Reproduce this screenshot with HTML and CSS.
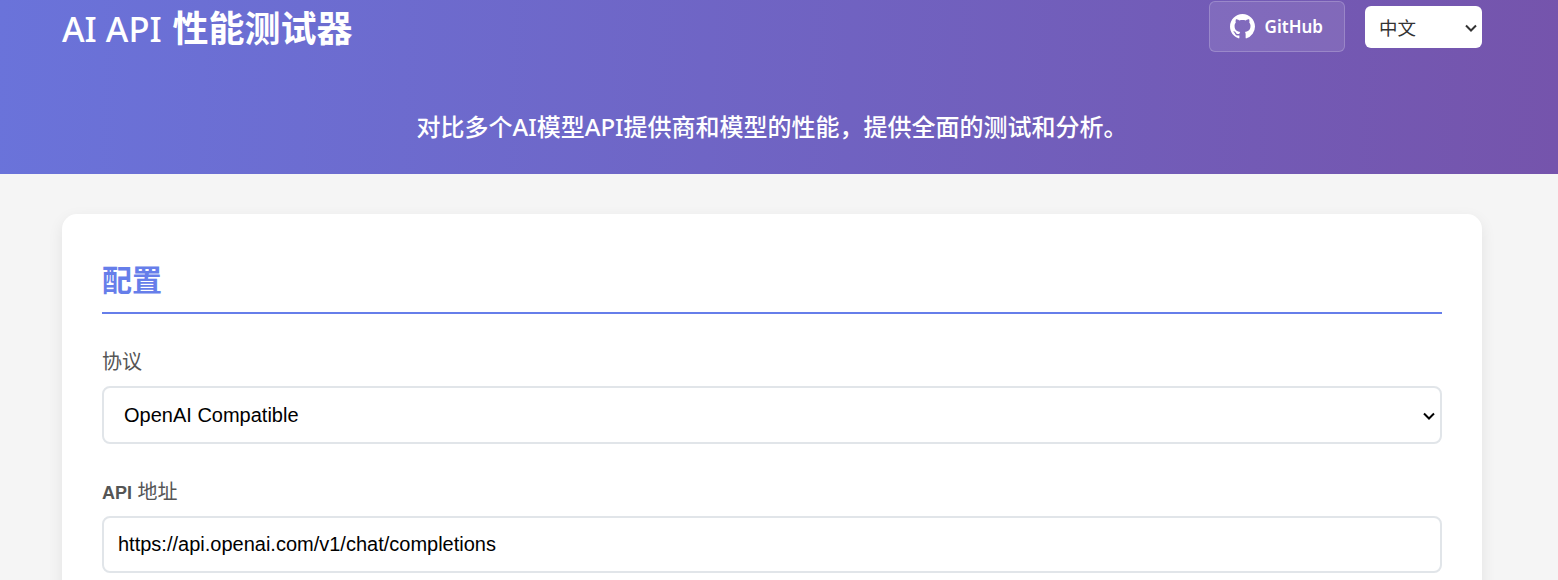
FILE: index.html
```html
<!DOCTYPE html>
<html lang="zh-CN">
<head>
    <meta charset="UTF-8">
    <meta name="viewport" content="width=device-width, initial-scale=1.0">
    <title>AI API 性能测试器</title>
    <link rel="stylesheet" href="styles.css">
</head>
<body>
    <header class="site-header">
        <div class="header-top">
            <h1 class="site-title">AI API <span class="site-title-cjk">性能测试器</span></h1>
            <div class="header-actions">
                <a class="github-link" href="#">
                    <svg class="github-icon" viewBox="0 0 16 16" aria-hidden="true">
                        <path d="M8 0C3.58 0 0 3.58 0 8c0 3.54 2.29 6.53 5.47 7.59.4.07.55-.17.55-.38 0-.19-.01-.82-.01-1.49-2.01.37-2.53-.49-2.69-.94-.09-.23-.48-.94-.82-1.13-.28-.15-.68-.52-.01-.53.63-.01 1.08.58 1.23.82.72 1.21 1.87.87 2.33.66.07-.52.28-.87.51-1.07-1.78-.2-3.64-.89-3.64-3.95 0-.87.31-1.59.82-2.15-.08-.2-.36-1.02.08-2.12 0 0 .67-.21 2.2.82.64-.18 1.32-.27 2-.27s1.36.09 2 .27c1.53-1.04 2.2-.82 2.2-.82.44 1.1.16 1.92.08 2.12.51.56.82 1.27.82 2.15 0 3.07-1.87 3.75-3.65 3.95.29.25.54.73.54 1.48 0 1.07-.01 1.93-.01 2.2 0 .21.15.46.55.38A8.01 8.01 0 0 0 16 8c0-4.42-3.58-8-8-8z"/>
                    </svg>
                    <span>GitHub</span>
                </a>
                <select class="lang-select">
                    <option>中文</option>
                    <option>English</option>
                </select>
            </div>
        </div>
        <p class="site-subtitle">对比多个AI模型API提供商和模型的性能，提供全面的测试和分析。</p>
    </header>

    <main class="main-content">
        <section class="card">
            <h2 class="card-title">配置</h2>
            <div class="form-group">
                <label class="form-label" for="protocol">协议</label>
                <select class="form-control form-select" id="protocol">
                    <option>OpenAI Compatible</option>
                </select>
            </div>
            <div class="form-group">
                <label class="form-label form-label-fixed" for="apiUrl"><b class="label-latin">API</b> 地址</label>
                <input class="form-control form-input" id="apiUrl" type="text" value="https://api.openai.com/v1/chat/completions">
            </div>
        </section>
    </main>
</body>
</html>
```

FILE: styles.css
```css
* {
    box-sizing: border-box;
    margin: 0;
    padding: 0;
}

html, body {
    height: 580px;
    overflow: hidden;
}

body {
    font-family: "Liberation Sans", "Noto Sans CJK SC", sans-serif;
    background-color: #f5f5f5;
    color: #333;
}

.site-header {
    height: 174px;
    padding: 0 76px 0 62px;
    background: linear-gradient(92deg, #6a73da 0%, #7554ac 100%);
    color: #fff;
}

.header-top {
    display: flex;
    justify-content: space-between;
    align-items: flex-start;
    padding-top: 1px;
}

.site-title {
    font-family: "Noto Sans", "Noto Sans CJK SC", sans-serif;
    font-size: 34.5px;
    font-weight: 500;
    line-height: 56px;
}

.site-title-cjk {
    margin-left: 2px;
    font-size: 36px;
    font-weight: 700;
}

.header-actions {
    display: flex;
    align-items: center;
    gap: 20px;
}

.github-link {
    display: flex;
    align-items: center;
    gap: 10px;
    height: 51px;
    padding: 0 21px 0 20px;
    border: 1px solid rgba(255, 255, 255, 0.2);
    border-radius: 6px;
    background-color: rgba(255, 255, 255, 0.1);
    color: #fff;
    font-family: "Noto Sans", sans-serif;
    font-size: 17px;
    font-weight: 600;
    text-decoration: none;
}

.github-icon {
    width: 25px;
    height: 25px;
    fill: #fff;
}

.lang-select {
    width: 117px;
    height: 42px;
    padding: 0 14px;
    border: none;
    border-radius: 6px;
    appearance: none;
    background: #fff url("data:image/svg+xml,%3Csvg xmlns='http://www.w3.org/2000/svg' width='12' height='8'%3E%3Cpath d='M1 1.5l5 5 5-5' fill='none' stroke='%23333' stroke-width='2'/%3E%3C/svg%3E") no-repeat 100px 18px;
    color: #333;
    font-family: "Noto Sans CJK SC", sans-serif;
    font-size: 18.5px;
}

.site-subtitle {
    margin-top: 52px;
    text-align: center;
    font-family: "Noto Sans", "Noto Sans CJK SC", sans-serif;
    font-size: 24px;
    font-weight: 500;
    line-height: 36px;
}

.main-content {
    padding: 40px 76px 0 62px;
}

.card {
    padding: 40px;
    border-radius: 15px;
    background-color: #fff;
    box-shadow: 0 5px 15px rgba(0, 0, 0, 0.08);
}

.card-title {
    margin-bottom: 34px;
    padding-top: 2px;
    padding-bottom: 8px;
    border-bottom: 2px solid #667eea;
    color: #667eea;
    font-family: "Noto Sans", "Noto Sans CJK SC", sans-serif;
    font-size: 30px;
    font-weight: 700;
    line-height: 48px;
}

.form-group {
    margin-bottom: 34px;
}

.form-label {
    display: block;
    margin-bottom: 10px;
    color: #555;
    font-size: 20px;
    line-height: 28px;
}

.form-label-fixed {
    height: 28px;
}

.label-latin {
    font-size: 18px;
}

.form-control {
    display: block;
    width: 100%;
    border: 2px solid #e1e5e9;
    border-radius: 8px;
    background-color: #fff;
    color: #000;
    font-family: "Liberation Sans", sans-serif;
    font-size: 20px;
}

.form-select {
    height: 58px;
    padding: 0 20px;
    appearance: none;
    background: #fff url("data:image/svg+xml,%3Csvg xmlns='http://www.w3.org/2000/svg' width='12' height='8'%3E%3Cpath d='M1 1.5l5 5 5-5' fill='none' stroke='%23000' stroke-width='2'/%3E%3C/svg%3E") no-repeat 1319px 24px;
}

.form-input {
    height: 57px;
    padding: 0 14px;
}
```
